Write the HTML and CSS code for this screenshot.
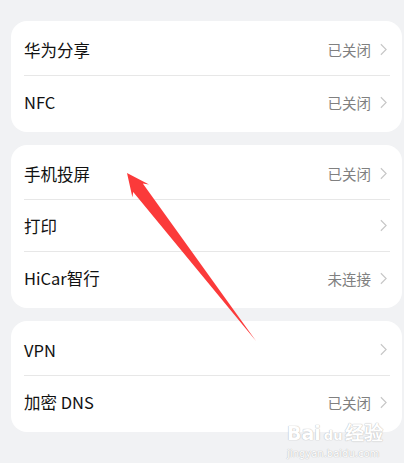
FILE: index.html
```html
<!DOCTYPE html>
<html lang="zh-CN">

<head>
    <meta charset="UTF-8">
    <meta name="viewport" content="width=device-width, initial-scale=1.0">
    <title>更多连接</title>
    <link rel="stylesheet" href="styles.css">
</head>

<body>

    <div class="page">

        <!-- 分享 -->
        <div class="card">
            <div class="row">
                <span class="label">华为分享</span>
                <span class="value">已关闭</span>
                <svg class="chevron" viewBox="0 0 8 14"><path d="M1 1 L7 7 L1 13" /></svg>
            </div>
            <div class="row">
                <span class="label">NFC</span>
                <span class="value">已关闭</span>
                <svg class="chevron" viewBox="0 0 8 14"><path d="M1 1 L7 7 L1 13" /></svg>
            </div>
        </div>

        <!-- 投屏 打印 -->
        <div class="card">
            <div class="row">
                <span class="label">手机投屏</span>
                <span class="value">已关闭</span>
                <svg class="chevron" viewBox="0 0 8 14"><path d="M1 1 L7 7 L1 13" /></svg>
            </div>
            <div class="row">
                <span class="label">打印</span>
                <span class="value"></span>
                <svg class="chevron" viewBox="0 0 8 14"><path d="M1 1 L7 7 L1 13" /></svg>
            </div>
            <div class="row">
                <span class="label">HiCar智行</span>
                <span class="value">未连接</span>
                <svg class="chevron" viewBox="0 0 8 14"><path d="M1 1 L7 7 L1 13" /></svg>
            </div>
        </div>

        <!-- 网络 -->
        <div class="card card-last">
            <div class="row">
                <span class="label">VPN</span>
                <span class="value"></span>
                <svg class="chevron" viewBox="0 0 8 14"><path d="M1 1 L7 7 L1 13" /></svg>
            </div>
            <div class="row">
                <span class="label">加密 DNS</span>
                <span class="value">已关闭</span>
                <svg class="chevron" viewBox="0 0 8 14"><path d="M1 1 L7 7 L1 13" /></svg>
            </div>
        </div>

    </div>

    <!-- 红色箭头标注 -->
    <svg class="arrow" width="404" height="463" viewBox="0 0 404 463">
        <polygon points="127,173 149,184.5 142.8,183.6 256,341 133.2,191.9 132.4,197.2" />
    </svg>

    <!-- 水印 -->
    <div class="watermark">
        <div class="wm-main">Bai<span class="wm-du">du</span>经验</div>
        <div class="wm-url">jingyan.baidu.com</div>
    </div>

</body>

</html>
```

FILE: styles.css
```css
body {
    margin: 0;
    background: #f1f2f4;
    font-family: "Noto Sans CJK SC", "Noto Sans", sans-serif;
    position: relative;
    width: 404px;
    height: 463px;
    overflow: hidden;
}

.page {
    padding: 21px 2px 0 11px;
}

.card {
    background: #fff;
    border-radius: 16px;
    padding: 3px 0 4px;
    margin-bottom: 13px;
}

.card-last {
    margin-top: 2px;
}

.row {
    display: flex;
    align-items: center;
    height: 52px;
    margin: 0 12px 0 13px;
    border-bottom: 1px solid #e7e7e7;
    box-sizing: border-box;
}

.row:last-child {
    border-bottom: none;
}

.label {
    flex: 1;
    font-size: 16.5px;
    color: #111;
}

.value {
    font-size: 14.5px;
    color: #808080;
    margin-right: 9px;
}

.chevron {
    width: 7px;
    height: 13px;
    fill: none;
    stroke: #c6c6c6;
    stroke-width: 1.3;
    margin-right: 3px;
}

.arrow {
    position: absolute;
    left: 0;
    top: 0;
}

.arrow polygon {
    fill: #fb3a3a;
}

.watermark {
    position: absolute;
    left: 287px;
    top: 422px;
    color: #fff;
    text-shadow: 0 0 1px #bdbdbd, 0 0 1px #bdbdbd;
    font-family: "DejaVu Sans", sans-serif;
}

.wm-main {
    font-size: 19px;
    font-weight: bold;
    line-height: 22px;
}

.wm-du {
    font-size: 13px;
    margin: 0 3px;
}

.wm-url {
    font-size: 10px;
    line-height: 14px;
    margin-top: 0;
}
```
